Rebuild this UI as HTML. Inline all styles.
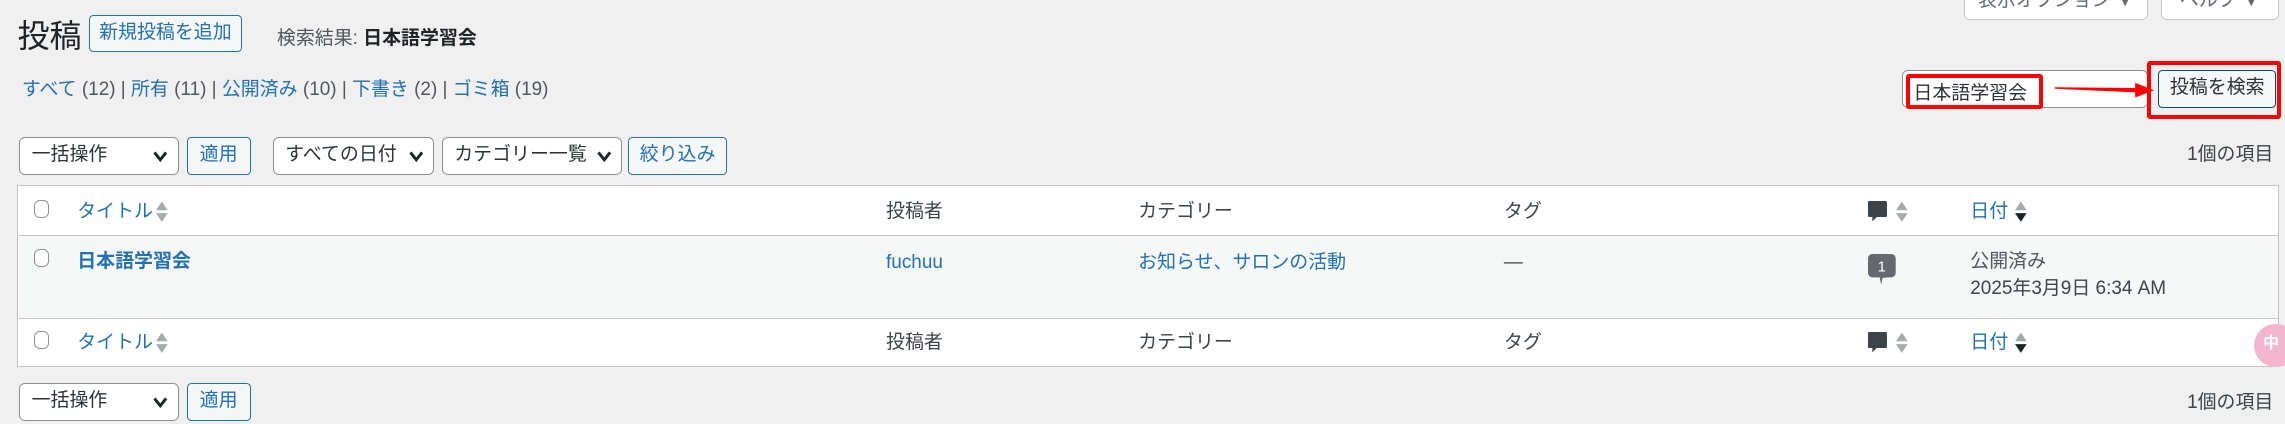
<!DOCTYPE html>
<html><head><meta charset="utf-8"><style>
html,body{margin:0;padding:0;width:2285px;height:424px;overflow:hidden;background:#f0f0f1;}
#w{zoom:1.4573;position:relative;width:1568px;height:291px;font-family:"Liberation Sans","Noto Sans CJK JP",sans-serif;font-size:13px;color:#3c434a;line-height:1.2;}
.a{position:absolute;white-space:nowrap;line-height:1.2;}
div.a{padding-top:2px;box-sizing:border-box;}
.lnk{color:#2271b1;}
.btn{position:absolute;box-sizing:border-box;border:1px solid #2271b1;border-radius:3px;background:#f6f7f7;color:#2271b1;text-align:center;font-size:13px;}
.sel{position:absolute;box-sizing:border-box;border:1px solid #8c8f94;border-radius:4px;background:#fff;color:#2c3338;font-size:13px;padding-left:8px;}
.sel svg{position:absolute;right:7px;top:9px;}
.cb{position:absolute;width:9px;height:11px;border:1px solid #8c8f94;border-radius:4px;background:#fff;}
.sort{position:absolute;width:8px;height:16px;}
</style></head><body><div id="w">
<div class="a" style="left:12px;top:10px;font-size:22px;color:#1d2327;">投稿</div>
<div class="btn" style="left:61px;top:10px;width:105px;height:26px;line-height:24px;">新規投稿を追加</div>
<div class="a" style="left:190px;top:17px;color:#50575e;">検索結果: <b style="color:#1d2327">日本語学習会</b></div>
<div class="a" style="left:1348px;top:-10px;width:126px;height:24px;border:1px solid #c3c4c7;border-radius:0 0 4px 4px;background:#fff;text-align:center;line-height:16px;color:#646970;">表示オプション ▼</div>
<div class="a" style="left:1483px;top:-10px;width:81px;height:24px;border:1px solid #c3c4c7;border-radius:0 0 4px 4px;background:#fff;text-align:center;line-height:16px;color:#646970;">ヘルプ ▼</div>
<div class="a" style="left:15px;top:52px;color:#50575e;"><span class="lnk">すべて</span> (12) | <span class="lnk">所有</span> (11) | <span class="lnk">公開済み</span> (10) | <span class="lnk">下書き</span> (2) | <span class="lnk">ゴミ箱</span> (19)</div>
<div class="a" style="left:1305px;top:48px;width:169px;height:26px;border:1px solid #8c8f94;border-radius:4px;background:#fff;"></div>
<div class="a" style="left:1308px;top:51px;width:94px;height:24px;border:3px solid #f00;border-radius:2px;"></div>
<div class="a" style="left:1313px;top:55px;font-size:13px;color:#2c3338;">日本語学習会</div>
<svg class="a" style="left:1410px;top:55px" width="80" height="14"><polygon points="0,5 55,5.5 55,2 68,7 55,12 55,8.5 0,6" fill="#f00"/></svg>
<div class="btn" style="left:1481px;top:48px;width:81px;height:26px;line-height:24px;border-color:#0a4b78;color:#2c3338;">投稿を検索</div>
<div class="a" style="left:1473px;top:42px;width:92px;height:40px;border:3px solid #f00;border-radius:2px;"></div>
<div class="sel" style="left:13px;top:94px;width:110px;height:26px;line-height:24px;">一括操作<svg width="10" height="8"><path d="M1 1l4 5 4-5" stroke="#1d2327" stroke-width="2" fill="none"/></svg></div>
<div class="btn" style="left:128px;top:94px;width:44px;height:26px;line-height:24px;">適用</div>
<div class="sel" style="left:187px;top:94px;width:111px;height:26px;line-height:24px;">すべての日付<svg width="10" height="8"><path d="M1 1l4 5 4-5" stroke="#1d2327" stroke-width="2" fill="none"/></svg></div>
<div class="sel" style="left:303px;top:94px;width:124px;height:26px;line-height:24px;">カテゴリー一覧<svg width="10" height="8"><path d="M1 1l4 5 4-5" stroke="#1d2327" stroke-width="2" fill="none"/></svg></div>
<div class="btn" style="left:431px;top:94px;width:68px;height:26px;line-height:24px;">絞り込み</div>
<div class="a" style="right:8px;top:97px;">1個の項目</div>
<div class="a" style="left:12px;top:127px;width:1552px;height:125px;border:1px solid #c3c4c7;background:#fff;"></div>
<div class="a" style="left:13px;top:161px;width:1550px;height:58px;background:#f6f7f7;border-top:1px solid #c3c4c7;border-bottom:1px solid #c3c4c7;"></div>
<!-- header -->
<div class="cb" style="left:23px;top:137px"></div>
<div class="a lnk" style="left:53px;top:136px;">タイトル</div>
<svg class="sort" style="left:107px;top:137px" width="8" height="16"><path d="M0 7l4-6 4 6zM0 9l4 6 4-6z" fill="#a7aaad"/></svg>
<div class="a" style="left:608px;top:136px;">投稿者</div>
<div class="a" style="left:781px;top:136px;">カテゴリー</div>
<div class="a" style="left:1032px;top:136px;">タグ</div>
<svg class="a" style="left:1282px;top:138px" width="14" height="16"><path d="M1 0h11a1 1 0 0 1 1 1v9a1 1 0 0 1-1 1H6l-3 3v-3H1a1 1 0 0 1-1-1V1a1 1 0 0 1 1-1z" fill="#3c434a"/></svg>
<svg class="sort" style="left:1301px;top:137px" width="8" height="16"><path d="M0 7l4-6 4 6zM0 9l4 6 4-6z" fill="#a7aaad"/></svg>
<div class="a lnk" style="left:1352px;top:136px;">日付</div>
<svg class="sort" style="left:1383px;top:137px" width="8" height="16"><path d="M0 7l4-6 4 6z" fill="#a7aaad"/><path d="M0 9l4 6 4-6z" fill="#1d2327"/></svg>
<!-- row -->
<div class="cb" style="left:23px;top:171px"></div>
<div class="a lnk" style="left:53px;top:170px;font-weight:bold;">日本語学習会</div>
<div class="a lnk" style="left:608px;top:171px;">fuchuu</div>
<div class="a lnk" style="left:781px;top:171px;">お知らせ、サロンの活動</div>
<div class="a" style="left:1032px;top:171px;">—</div>
<svg class="a" style="left:1282px;top:174px" width="22" height="26"><path d="M3 0h13a3 3 0 0 1 3 3v10a3 3 0 0 1-3 3H13l-3 .5-1 4.5-1-5H3a3 3 0 0 1-3-3V3a3 3 0 0 1 3-3z" fill="#646970"/><text x="9.5" y="12" fill="#fff" font-size="10" text-anchor="middle" font-family="Liberation Sans">1</text></svg>
<div class="a" style="left:1352px;top:170px;color:#50575e;">公開済み</div>
<div class="a" style="left:1352px;top:189px;">2025年3月9日 6:34 AM</div>
<!-- footer -->
<div class="cb" style="left:23px;top:227px"></div>
<div class="a lnk" style="left:53px;top:226px;">タイトル</div>
<svg class="sort" style="left:107px;top:227px" width="8" height="16"><path d="M0 7l4-6 4 6zM0 9l4 6 4-6z" fill="#a7aaad"/></svg>
<div class="a" style="left:608px;top:226px;">投稿者</div>
<div class="a" style="left:781px;top:226px;">カテゴリー</div>
<div class="a" style="left:1032px;top:226px;">タグ</div>
<svg class="a" style="left:1282px;top:228px" width="14" height="16"><path d="M1 0h11a1 1 0 0 1 1 1v9a1 1 0 0 1-1 1H6l-3 3v-3H1a1 1 0 0 1-1-1V1a1 1 0 0 1 1-1z" fill="#3c434a"/></svg>
<svg class="sort" style="left:1301px;top:227px" width="8" height="16"><path d="M0 7l4-6 4 6zM0 9l4 6 4-6z" fill="#a7aaad"/></svg>
<div class="a lnk" style="left:1352px;top:226px;">日付</div>
<svg class="sort" style="left:1383px;top:227px" width="8" height="16"><path d="M0 7l4-6 4 6z" fill="#a7aaad"/><path d="M0 9l4 6 4-6z" fill="#1d2327"/></svg>
<div class="a" style="left:1547px;top:222px;width:30px;height:30px;border-radius:50%;background:#f4b6cf;color:#fff;font-weight:bold;line-height:24px;padding-left:6px;font-size:11px;">中</div>
<!-- bottom -->
<div class="sel" style="left:13px;top:263px;width:110px;height:26px;line-height:24px;">一括操作<svg width="10" height="8"><path d="M1 1l4 5 4-5" stroke="#1d2327" stroke-width="2" fill="none"/></svg></div>
<div class="btn" style="left:128px;top:263px;width:44px;height:26px;line-height:24px;">適用</div>
<div class="a" style="right:8px;top:267px;">1個の項目</div>
</div></body></html>
